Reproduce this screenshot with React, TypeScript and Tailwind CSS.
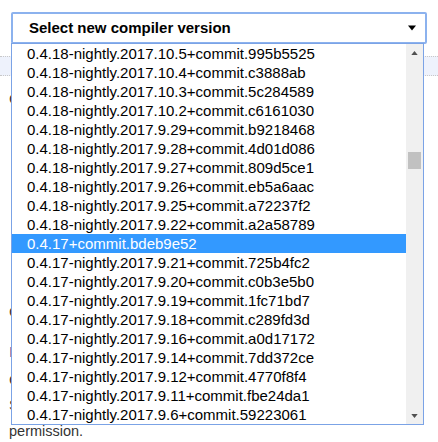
import React from 'react';

const versions = [
  '0.4.18-nightly.2017.10.5+commit.995b5525',
  '0.4.18-nightly.2017.10.4+commit.c3888ab',
  '0.4.18-nightly.2017.10.3+commit.5c284589',
  '0.4.18-nightly.2017.10.2+commit.c6161030',
  '0.4.18-nightly.2017.9.29+commit.b9218468',
  '0.4.18-nightly.2017.9.28+commit.4d01d086',
  '0.4.18-nightly.2017.9.27+commit.809d5ce1',
  '0.4.18-nightly.2017.9.26+commit.eb5a6aac',
  '0.4.18-nightly.2017.9.25+commit.a72237f2',
  '0.4.18-nightly.2017.9.22+commit.a2a58789',
  '0.4.17+commit.bdeb9e52',
  '0.4.17-nightly.2017.9.21+commit.725b4fc2',
  '0.4.17-nightly.2017.9.20+commit.c0b3e5b0',
  '0.4.17-nightly.2017.9.19+commit.1fc71bd7',
  '0.4.17-nightly.2017.9.18+commit.c289fd3d',
  '0.4.17-nightly.2017.9.16+commit.a0d17172',
  '0.4.17-nightly.2017.9.14+commit.7dd372ce',
  '0.4.17-nightly.2017.9.12+commit.4770f8f4',
  '0.4.17-nightly.2017.9.11+commit.fbe24da1',
  '0.4.17-nightly.2017.9.6+commit.59223061',
];

const selected = '0.4.17+commit.bdeb9e52';

const Triangle = ({ up, className }: { up?: boolean; className?: string }) => (
  <svg width="8" height="5" viewBox="0 0 8 5" className={className}>
    <path d={up ? 'M0 5 L4 0 L8 5 Z' : 'M0 0 L8 0 L4 5 Z'} fill="currentColor" />
  </svg>
);

const App: React.FC = () => {
  return (
    <div
      className="relative w-[438px] h-[442px] overflow-hidden bg-white text-[15px] text-[#333]"
      style={{ fontFamily: '"Liberation Sans", Arial, sans-serif' }}
    >
      {/* Page behind the open dropdown */}
      <div className="pt-3 px-[11px]">
        <div className="h-[32px] flex items-center justify-between pl-4 pr-[9px] border-2 border-[#8cb2ee] rounded-[2px] bg-white">
          <span className="font-bold text-black">Select new compiler version</span>
          <Triangle className="text-black w-[8px] h-[6px]" />
        </div>
      </div>
      <div className="mt-3 h-[20px] border-y border-dotted border-[#c8c8c8] bg-[#eef2fc]" />
      <div className="pl-[9px] leading-[20px]">
        <p className="mt-[13px]">Compiler options</p>
        <p className="mt-[193px]">Compile automatically</p>
        <p className="mt-[20px] text-[#2a4ea0]">If the compiler fails</p>
        <p className="mt-[8px]">Contracts are checked</p>
        <p className="mt-[5px]">See the documentation</p>
        <p className="mt-[6px] text-[14.5px]">permission.</p>
      </div>

      {/* Open options list */}
      <div className="absolute left-[11px] top-[43px] w-[413px] h-[382px] flex border border-[#7ba3e6] bg-white">
        <ul className="flex-1 text-black">
          {versions.map((v) => (
            <li
              key={v}
              className={
                v === selected
                  ? 'h-[19px] leading-[19px] pl-[15px] bg-[#3399ff] text-white whitespace-nowrap'
                  : 'h-[19px] leading-[19px] pl-[15px] whitespace-nowrap'
              }
            >
              {v}
            </li>
          ))}
        </ul>
        <div className="w-[17px] bg-[#f0f0f0] flex flex-col items-center">
          <div className="h-[17px] flex items-center justify-center">
            <Triangle up className="text-[#505050] w-[7px] h-[4px]" />
          </div>
          <div className="flex-1 w-full px-[2px]">
            <div className="mt-[91px] h-[17px] bg-[#c1c1c1]" />
          </div>
          <div className="h-[17px] flex items-center justify-center">
            <Triangle className="text-[#505050] w-[7px] h-[4px]" />
          </div>
        </div>
      </div>
    </div>
  );
};

export default App;
